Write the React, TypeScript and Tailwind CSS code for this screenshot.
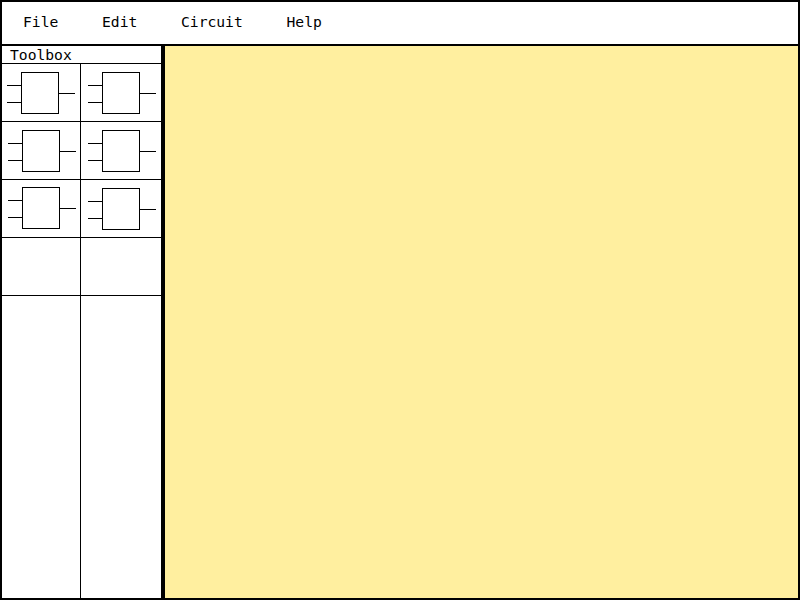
const menus = [
  { label: "File", place: "ml-[21px] w-[79px]" },
  { label: "Edit", place: "w-[79px]" },
  { label: "Circuit", place: "w-[105.5px]" },
  { label: "Help", place: "" },
];

const slots = [
  { gate: true, pad: "pl-[5px] pt-[8px]" },
  { gate: true, pad: "pl-[7px] pt-[8px]" },
  { gate: true, pad: "pl-[6px] pt-[8px]" },
  { gate: true, pad: "pl-[7px] pt-[8px]" },
  { gate: true, pad: "pl-[6px] pt-[7px]" },
  { gate: true, pad: "pl-[7px] pt-[8px]" },
  { gate: false, pad: "" },
  { gate: false, pad: "" },
];

// Two-input, one-output component symbol
function Gate() {
  return (
    <svg width="68" height="42" viewBox="0 0 68 42" fill="none" stroke="#000" strokeWidth="1" className="block">
      <rect x="14.5" y="0.5" width="37" height="41" />
      <path d="M0 13.5H14M0 30.5H14M52 21.5H68" />
    </svg>
  );
}

export default function App() {
  return (
    <div className="flex h-[600px] w-[800px] flex-col overflow-hidden border-2 border-black bg-white [font-family:'DejaVu_Sans_Mono',monospace] text-[14.67px] text-black">
      <nav className="flex h-[44px] shrink-0 items-center border-b-2 border-black pb-[2px]">
        {menus.map((m) => (
          <button key={m.label} className={`text-left leading-[20px] ${m.place}`}>
            {m.label}
          </button>
        ))}
      </nav>
      <div className="flex min-h-0 flex-1">
        <aside className="flex w-[163px] shrink-0 flex-col border-r-4 border-black">
          <h2 className="h-[18px] shrink-0 border-b border-black pl-[8px] leading-[17px]">Toolbox</h2>
          <div className="grid flex-1 grid-cols-[79px_80px] grid-rows-[58px_58px_58px_58px_1fr]">
            {slots.map((s, i) => (
              <div key={i} className={`border-b border-black odd:border-r ${s.pad}`}>
                {s.gate && <Gate />}
              </div>
            ))}
            <div className="border-r border-black" />
            <div />
          </div>
        </aside>
        <main className="flex-1 bg-[#ffef9f]" />
      </div>
    </div>
  );
}
